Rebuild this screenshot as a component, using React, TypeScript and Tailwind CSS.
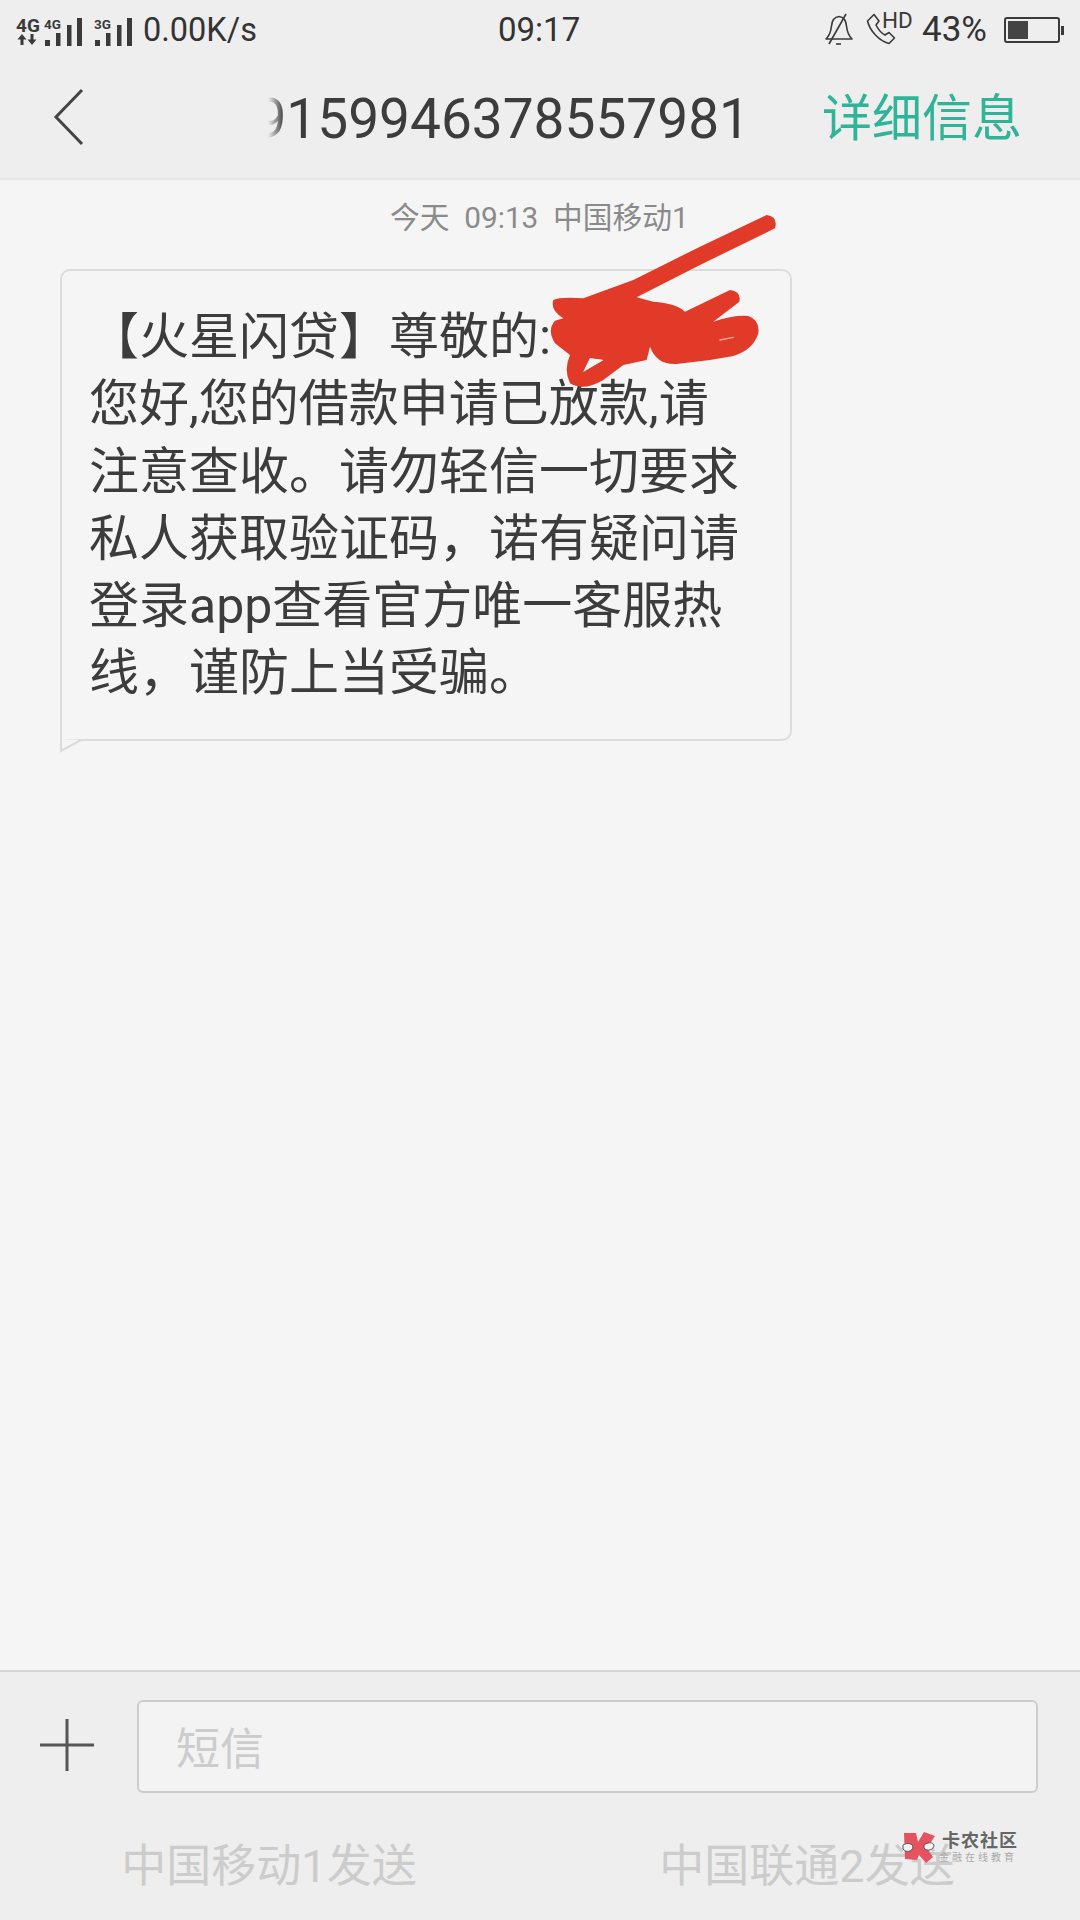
function SignalBars({ x }: { x: number }) {
  return (
    <g fill="#3a3a3a">
      <rect x={x} y="35" width="5" height="6" />
      <rect x={x + 11} y="28" width="4.5" height="13" />
      <rect x={x + 22} y="20" width="4.5" height="21" />
      <rect x={x + 32} y="13" width="5" height="28" />
    </g>
  );
}

function NetworkIcons() {
  return (
    <svg width="135" height="50" viewBox="0 0 135 50" className="shrink-0">
      <g fontFamily="Roboto, sans-serif" fontWeight="700" fill="#3a3a3a">
        <text x="16" y="27" fontSize="19">4G</text>
        <text x="44" y="23.5" fontSize="13.5">4G</text>
        <text x="94" y="23.5" fontSize="13.5">3G</text>
      </g>
      <g fill="#3a3a3a">
        <path d="M22 29 L26.5 34.5 L23.5 34.5 L23.5 40 L20.5 40 L20.5 34.5 L17.5 34.5 Z" />
        <path d="M32 40 L27.5 34.5 L30.5 34.5 L30.5 29 L33.5 29 L33.5 34.5 L36.5 34.5 Z" />
      </g>
      <SignalBars x={45} />
      <SignalBars x={95} />
    </svg>
  );
}

function BellOff() {
  return (
    <svg width="30" height="34" viewBox="0 0 30 34" fill="none" stroke="#3a3a3a" strokeWidth="1.6" className="shrink-0">
      <path d="M2 26 C6 22 7 18 7.5 13 C8 7 10.5 4 15 3.5 C19.5 4 22 7 22.5 13 C23 18 24 22 28 26 Z" strokeLinejoin="round" />
      <path d="M12 31 L17 31" />
      <path d="M22 1 L5 31" />
    </svg>
  );
}

function HdPhone() {
  return (
    <div className="relative h-[34px] w-[40px] shrink-0">
      <svg width="30" height="32" viewBox="0 0 30 32" fill="none" stroke="#3a3a3a" strokeWidth="1.6">
        <path d="M1.5 8 L8 1.5 L13 8 L10 12 C12 16 15 20 19 22 L23 19.5 L28.5 25 L23 30.5 C13 28 4 18 1.5 8 Z" strokeLinejoin="round" />
      </svg>
      <span className="absolute left-[16px] top-[-6px] text-[22.5px] leading-[26px] text-[#3a3a3a]">HD</span>
    </div>
  );
}

function Battery() {
  return (
    <div className="flex shrink-0 items-center">
      <div className="h-[26px] w-[56px] rounded-[3px] border-2 border-[#3a3a3a] p-[2px]">
        <div className="h-full w-[20px] bg-[#444444]" />
      </div>
      <div className="ml-[1px] h-[9px] w-[3px] bg-[#3a3a3a]" />
    </div>
  );
}

function StatusBar() {
  return (
    <div className="relative flex h-[60px] shrink-0 items-center text-[#333333]">
      <NetworkIcons />
      <span className="ml-[8px] text-[32.5px]">0.00K/s</span>
      <span className="absolute left-[498px] top-[10px] text-[33px] leading-[40px]">09:17</span>
      <div className="ml-auto mr-[16px] flex items-center">
        <BellOff />
        <div className="ml-[12px]"><HdPhone /></div>
        <span className="ml-[16px] text-[35px] leading-[40px]">43%</span>
        <div className="ml-[17px]"><Battery /></div>
      </div>
    </div>
  );
}

function Header() {
  return (
    <div className="flex h-[120px] shrink-0 items-center border-b-2 border-[#e6e6e6]">
      <svg width="34" height="60" viewBox="0 0 34 60" fill="none" stroke="#444444" strokeWidth="3" className="ml-[52px] mt-[-4px] shrink-0">
        <path d="M30 3 L4 30 L30 57" />
      </svg>
      <div className="relative ml-[182px] flex h-[70px] w-[482px] justify-end overflow-hidden text-[55px] leading-[70px] text-[#3c3c3c]">
        <span className="whitespace-nowrap">9159946378557981</span>
        <div className="absolute inset-y-0 left-0 w-[16px] bg-gradient-to-r from-[#eeeeee] to-transparent" />
      </div>
      <span className="ml-[72px] whitespace-nowrap text-[50px] leading-[70px] text-[#2fb497]">详细信息</span>
    </div>
  );
}

function Bubble() {
  return (
    <div className="relative ml-[60px] mt-[31px] h-[472px] w-[732px] rounded-[10px] rounded-bl-none border-2 border-[#dcdcdc] pl-[27px] pt-[33px] text-[50px] leading-[67.3px] text-[#3c3c3c]">
      <p className="whitespace-nowrap">【火星闪贷】尊敬的:</p>
      <p className="whitespace-nowrap">您好,您的借款申请已放款,请</p>
      <p className="whitespace-nowrap">注意查收。请勿轻信一切要求</p>
      <p className="whitespace-nowrap">私人获取验证码，诺有疑问请</p>
      <p className="whitespace-nowrap">登录app查看官方唯一客服热</p>
      <p className="whitespace-nowrap">线，谨防上当受骗。</p>
      <svg width="22" height="14" viewBox="0 0 22 14" className="absolute left-[-2px] top-[468px]">
        <path d="M1 0 L1 12 L21 1" fill="#f5f5f5" stroke="#dcdcdc" strokeWidth="2" />
      </svg>
    </div>
  );
}

function Scribble() {
  return (
    <svg
      width="320"
      height="220"
      viewBox="0 0 960 660"
      className="pointer-events-none absolute left-[500px] top-[190px]"
    >
      <path
        d="M800 75 Q835 80 825 115 L600 225 L410 322 L460 335 Q530 340 555 365 L690 300 Q725 305 718 335 L640 395 Q700 375 745 378 Q780 390 775 430 Q760 480 700 498 L630 510 L530 522 Q470 525 450 470 L440 510 L370 525 L310 570 Q250 605 210 580 Q190 540 210 495 L165 460 Q140 420 165 392 L190 385 Q150 360 160 330 Q180 320 250 325 L400 270 L600 170 Z M250 545 L310 510 L270 505 Z"
        fill="#e13a28"
        fillRule="evenodd"
      />
      <path d="M250 545 L310 510 L270 505 Z" fill="#f5f5f5" />
      <path d="M660 450 L700 442" stroke="#f3a89f" strokeWidth="4" strokeLinecap="round" />
    </svg>
  );
}

function Watermark() {
  return (
    <div className="pointer-events-none absolute left-[900px] top-[1830px] flex items-center">
      <svg width="38" height="34" viewBox="0 0 38 34" className="shrink-0">
        <path d="M4 3 L16 3 L18 12 L24 2 L35 6 L27 18 L33 27 L26 33 L19 25 L17 30 L5 29 Z" fill="#e4535f" />
        <path d="M3 15 C8 12 13 14 13 17 C12 22 6 23 3 19 Z" fill="#f3f3f3" stroke="#555555" strokeWidth="1" />
        <path d="M24 15 C28 12 33 12 34 15 C34 20 27 22 24 18 Z" fill="#f3f3f3" stroke="#555555" strokeWidth="1" />
      </svg>
      <div className="ml-[1px] flex flex-col">
        <span className="ml-[3px] whitespace-nowrap text-[18px] font-bold leading-[21px] tracking-[1px] text-[#666666]">卡农社区</span>
        <span className="whitespace-nowrap text-[10px] leading-[13px] tracking-[3px] text-[#aaaaaa]">金融在线教育</span>
      </div>
    </div>
  );
}

function Composer() {
  return (
    <div className="flex h-[250px] shrink-0 flex-col border-t-2 border-[#d4d4d4] bg-[#eeeeee]">
      <div className="flex items-center pt-[28px]">
        <svg width="54" height="54" viewBox="0 0 54 54" stroke="#555555" strokeWidth="3" className="ml-[40px] mt-[-3px] shrink-0">
          <path d="M0 27 L54 27 M27 1 L27 53" />
        </svg>
        <div className="ml-[43px] flex h-[93px] w-[901px] items-center rounded-[6px] border-2 border-[#cccccc] bg-[#f3f3f3] pl-[37px] pt-[6px] text-[44px] text-[#cccccc]">
          短信
        </div>
      </div>
      <div className="mt-[46px] flex pr-[4px] text-[45px] leading-[56px] text-[#cccccc]">
        <div className="flex-1 text-center">中国移动1发送</div>
        <div className="flex-1 text-center">中国联通2发送</div>
      </div>
    </div>
  );
}

export default function App() {
  return (
    <div className="relative flex h-[1920px] w-[1080px] flex-col overflow-hidden bg-[#f5f5f5] font-['Roboto','Noto_Sans_CJK_SC',sans-serif]">
      <div className="bg-[#eeeeee]">
        <StatusBar />
        <Header />
      </div>
      <div className="flex-1">
        <p className="mt-[18px] whitespace-nowrap pl-[390px] text-[29.75px] leading-[40px] text-[#8a8a8a]">
          今天 &nbsp;09:13 &nbsp;中国移动1
        </p>
        <Bubble />
      </div>
      <Composer />
      <Scribble />
      <Watermark />
    </div>
  );
}
